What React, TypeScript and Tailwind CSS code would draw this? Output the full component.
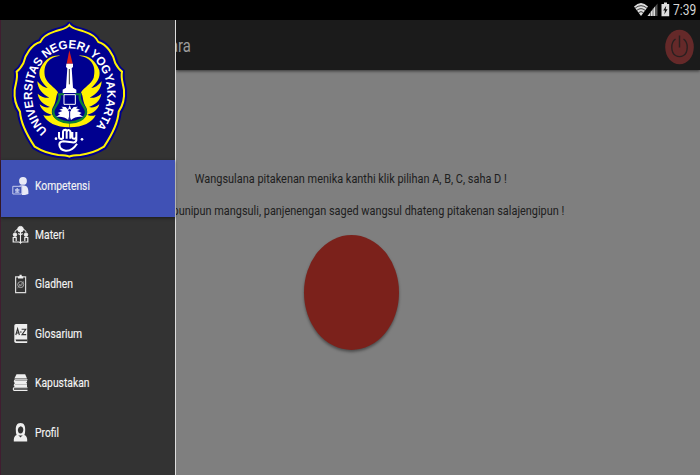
import React from "react";

const BADGE =
  "M208 30 C216 42 232 43 251 49 C276 57 290 68 295 81 C321 88 341 120 346 145 Q356 163 366 170 C362 190 368 200 372 225 C374 250 370 270 356 290 C354 325 334 362 312 395 C291 408 266 417 241 420 Q216 421 208 425 Q200 421 175 420 C150 417 125 408 104 395 C82 362 62 325 60 290 C46 270 42 250 44 225 C48 200 54 190 50 170 Q60 163 70 145 C75 120 95 88 121 81 C126 68 140 57 165 49 C184 43 200 42 208 30 Z";

const WING =
  "M180 122 C140 128 128 155 136 188 C144 208 162 214 174 232 C166 246 170 262 158 278 C150 298 160 318 208 324 L208 337 C168 337 140 322 130 300 C140 304 150 303 155 299 C138 296 123 284 119 268 C132 278 142 279 150 276 C130 268 116 256 113 236 C126 247 138 250 148 248 C128 238 113 222 112 199 C122 212 134 219 143 219 C126 204 115 188 119 166 C130 138 150 120 180 122 Z";

function Emblem() {
  return (
    <svg className="ml-[11px] block h-[140px] w-[115px]" viewBox="36 15 345 420">
      <path d={BADGE} fill="#00008c" stroke="#00008c" strokeWidth="18" strokeLinejoin="round" />
      <path d={BADGE} fill="#00008f" stroke="#fff200" strokeWidth="6" />
      <path id="ring" d="M143 347 A113 136 0 1 1 275 347" fill="none" />
      <text fill="#fff" fontSize="36" fontWeight="700" className="font-['Liberation_Sans',sans-serif]">
        <textPath href="#ring" textLength="622" lengthAdjust="spacingAndGlyphs">
          UNIVERSITAS NEGERI YOGYAKARTA
        </textPath>
      </text>
      <path d={WING} fill="#fff200" />
      <path d={WING} fill="#fff200" transform="translate(417 0) scale(-1 1)" />
      <path
        d="M178 238 C185 262 158 276 160 292 C162 312 186 322 209 323 C232 322 256 312 258 292 C260 276 233 262 240 238"
        fill="#00008f"
        stroke="#0c8035"
        strokeWidth="7"
      />
      <path d="M174 238 H192 M226 238 H244" stroke="#0c8035" strokeWidth="6" />
      <path d="M208 106 L218 146 H200 Z" fill="#d51e20" />
      <path d="M199 146 H219 V156 L215 160 L219 218 L229 224 V234 H188 V224 L198 218 L202 160 L198 156 Z" fill="#fff" />
      <path d="M208 162 V208" stroke="#333" strokeWidth="3" />
      <path d="M192 239 H226 V268 H192 Z" fill="#00008f" stroke="#fff" strokeWidth="3" />
      <path
        d="M205 315 C194 305 182 304 168 306 L180 298 L173 294 L187 288 L178 284 L190 280 L184 275 L197 276 L206 286 Z M213 315 C224 305 236 304 250 306 L238 298 L245 294 L231 288 L240 284 L228 280 L234 275 L221 276 L212 286 Z"
        fill="#fff"
      />
      <path d="M209 270 L218 294 L209 318 L200 294 Z" fill="#fff" />
      <path d="M209 290 V318" stroke="#00008f" strokeWidth="3" />
      <circle cx="209" cy="286" r="4" fill="#00008f" />
      <g fill="none" stroke="#fff" strokeWidth="6">
        <path d="M177 351 V366 Q177 372 184 372 Q189 372 189 366 V351 M189 371 V351 Q189 344 197 344 Q200 344 200 351 V371 M200 366 V350 Q205 341 211 349 V371 M217 351 V366 Q217 372 224 371 Q229 370 229 364 V351 M229 362 V376 Q227 384 216 382 L190 379 Q178 380 178 389 Q179 405 197 407 C214 408 224 397 231 386" />
      </g>
      <circle cx="168" cy="371" r="4" fill="#fff" />
      <circle cx="246" cy="373" r="4" fill="#fff" />
    </svg>
  );
}

const icons: Record<string, React.ReactNode> = {
  Kompetensi: (
    <>
      <circle cx="11" cy="4.9" r="3.9" fill="#e8eaf6" />
      <path d="M6 10.2 Q11 8.2 14 10 Q16.8 11.5 16.4 18 L13 19 H10 V10.2 Z" fill="#e8eaf6" />
      <path d="M.8 10.3 H9.8 V18 H.8 Z" fill="#4355b5" stroke="#c5cbed" strokeWidth="1" />
      <path d="M5.2 12 V16 M3 14 H7.5 M3.2 16.2 H7.3" stroke="#c5cbed" strokeWidth="1.3" />
    </>
  ),
  Materi: (
    <g fill="#eee" stroke="#eee">
      <circle cx="8.5" cy="4.2" r="2.8" />
      <circle cx="3" cy="9.6" r="1.7" />
      <circle cx="14" cy="9.6" r="1.7" />
      <path d="M2.8 7 Q3.8 4.4 6.5 4 M10.5 4 Q13.2 4.4 14.2 7" fill="none" strokeWidth="1" />
      <path d="M1.2 12 V17 H6.5 Q8 17 8.5 18 Q9 17 10.5 17 H15.8 V12 M1.2 12.4 H4.2 V16 M15.8 12.4 H12.8 V16" fill="none" strokeWidth="1.2" />
      <path d="M8.5 7 V17.5 M6.2 8.6 Q8 9 8.5 10 Q9 9 10.8 8.6" fill="none" strokeWidth="1.1" />
    </g>
  ),
  Gladhen: (
    <>
      <path d="M3.6 2.8 H13.6 V18.6 H3.6 Z" fill="none" stroke="#d8d8d8" strokeWidth="1.2" />
      <path d="M6 4.4 V2.4 H7.5 V.8 H9.7 V2.4 H11.2 V4.4 Z" fill="#eee" />
      <circle cx="8.7" cy="10.6" r="3" fill="none" stroke="#aaa" strokeWidth="1" />
      <path d="M5.5 13.8 L12 7.5 M7 9.8 L8.5 12 L10.7 10" fill="none" stroke="#aaa" strokeWidth=".8" />
    </>
  ),
  Glosarium: (
    <>
      <path d="M4 0 H15.2 V19 H4 Q2.3 19 2.3 17.2 V1.8 Q2.3 0 4 0 Z" fill="#eee" />
      <path d="M3.5 15.4 H15.2 V17.3 H4.2 Z" fill="#333" />
      <path d="M3.8 11 L5.6 4.8 L7.4 11 M4.4 9 H6.9 M7.8 8 H9.6 M9.6 5.2 H13.8 L10 10.6 H14.2" fill="none" stroke="#333" strokeWidth="1.1" />
    </>
  ),
  Kapustakan: (
    <>
      <path d="M4.5 1.3 H13.2 L15 5.6 H2.4 Z" fill="#eee" />
      <path d="M15.5 6.8 H3 Q1.6 8.2 3 9.6 H14.5 M15 10.9 H3 Q1.6 12.2 3 13.5 H15 M15.5 14.7 H2 Q.6 16 2 17.4 H15.5" fill="none" stroke="#eee" strokeWidth="1.1" />
      <path d="M3 8.2 H15 M3 12.2 H15" stroke="#eee" strokeWidth="1.6" />
    </>
  ),
  Profil: (
    <>
      <path d="M8.5 0 C12.5 0 13.3 3.5 13.2 7 Q13.2 10 12.4 12 Q15.6 13 15.2 18.6 H1.8 Q1.4 13 4.6 12 Q3.8 10 3.8 7 C3.7 3.5 4.5 0 8.5 0 Z" fill="#eee" />
      <path d="M8.5 3.2 Q11.5 4 11.3 7 Q10.8 10.5 8.5 10.5 Q6.2 10.5 5.8 7 Q5.8 4.5 8.5 3.2 Z" fill="#333" />
      <path d="M6.2 12 Q8.5 13 10.8 12 L8.5 14.4 Z" fill="#333" />
    </>
  ),
};

const items = ["Materi", "Gladhen", "Glosarium", "Kapustakan", "Profil"];

function Entry({ name }: { name: string }) {
  return (
    <div className="flex h-[49.5px] items-center pl-[11px]">
      <svg className="mt-[2px] h-5 w-[17px] shrink-0" viewBox="0 0 17 20" preserveAspectRatio="none">
        {icons[name]}
      </svg>
      <span className="ml-[6.3px] origin-left scale-x-[.765] text-[13.5px] leading-5 whitespace-nowrap text-[#f4f4f4] [-webkit-text-stroke:.15px]">
        {name}
      </span>
    </div>
  );
}

function StatusBar() {
  return (
    <div className="flex h-5 shrink-0 items-center justify-end bg-black pr-[4px]">
      <svg className="h-5 w-[38px]" viewBox="0 0 38 20">
        <path d="M1 6.5 Q8 -.5 15 6.5 L8 16 Z" fill="#ddd" />
        <path d="M2.2 8 Q8 3.4 13.8 8 M3.9 10.3 Q8 7 12.1 10.3 M5.6 12.6 Q8 10.6 10.4 12.6" fill="none" stroke="#111" strokeWidth=".8" />
        <path d="M24.5 3.5 V16 H14.5 Z" fill="#555" />
        <path d="M22 6.5 V16 H14.5 Z" fill="#ddd" />
        <path d="M17.5 11 V16 M20 8 V16" stroke="#333" strokeWidth=".6" />
        <path d="M28.5 4 H31 V2.4 H34 V4 H36.2 V16.2 H28.5 Z" fill="#ddd" />
        <path d="M33.2 5.8 L30.2 10.6 H32 L31.3 14.4 L34.6 9.3 H32.7 Z" fill="#111" />
      </svg>
      <span className="ml-[2px] w-[23px] text-[15px] leading-5 whitespace-nowrap text-[#d6d6d6]">
        <span className="inline-block origin-left scale-x-[.8]">7:39</span>
      </span>
    </div>
  );
}

export default function App() {
  return (
    <div className="flex h-[475px] w-[700px] flex-col overflow-hidden bg-[#7f7f7f] font-[Roboto,sans-serif]">
      <StatusBar />
      <div className="flex min-h-0 flex-1">
        <aside className="z-10 flex w-[176px] shrink-0 flex-col border-r border-l border-r-[#dedede] border-l-[#401d30] bg-[#333]">
          <div className="h-[140px]">
            <Emblem />
          </div>
          <div className="h-[56.5px] bg-[#4051b5] shadow-[0_1px_3px_rgba(0,0,0,.5)]">
            <Entry name="Kompetensi" />
          </div>
          <nav className="-mt-[7.4px] flex flex-col">
            {items.map((n) => (
              <Entry key={n} name={n} />
            ))}
          </nav>
        </aside>
        <div className="flex min-w-0 flex-1 flex-col">
          <header className="flex h-[50px] shrink-0 items-center justify-between bg-[#1b1b1b] pr-[6px] shadow-[0_1px_3px_rgba(0,0,0,.6)]">
            <span className="-ml-[6px] origin-left scale-x-[.8] pt-[2px] text-[18.5px] leading-6 text-[#9c9c9c]">ara</span>
            <svg className="mt-[3px] h-[36px] w-[29px]" viewBox="0 0 29 36">
              <ellipse cx="14.5" cy="18" rx="14.3" ry="17.3" fill="#652929" />
              <path d="M10.5 10 C5.3 13.5 5.8 23.5 10.5 26.5 Q14.5 28.8 18.5 26.5 C23.2 23.5 23.7 13.5 18.5 10 M14.5 6.5 V18.5" fill="none" stroke="#2a2020" strokeWidth="1.4" />
            </svg>
          </header>
          <main className="flex flex-1 flex-col items-center pr-[174px] text-[13.5px] leading-5 text-[#202020]">
            <p className="mt-[98px] scale-x-[.809] whitespace-nowrap">
              Wangsulana pitakenan menika kanthi klik pilihan A, B, C, saha D !
            </p>
            <p className="mt-[12px] flex w-[388px] justify-end self-start">
              <span className="origin-right scale-x-[.809] whitespace-nowrap">
                punipun mangsuli, panjenengan saged wangsul dhateng pitakenan salajengipun !
              </span>
            </p>
            <div className="mt-[15px] h-[115px] w-[95px] shrink-0 rounded-[50%] bg-[#7b211b] shadow-[0_2px_3px_rgba(0,0,0,.4)]" />
          </main>
        </div>
      </div>
    </div>
  );
}
